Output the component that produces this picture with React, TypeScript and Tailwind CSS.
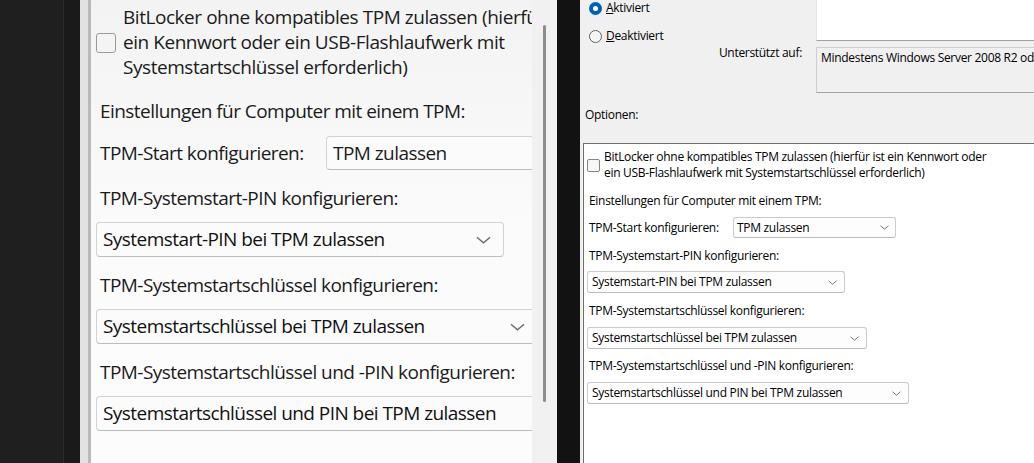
import React from "react";

function Chevron({ w, h, className }: { w: number; h: number; className?: string }) {
  return (
    <svg width={w} height={h} viewBox="0 0 10 5" className={className}>
      <path d="M0.6 0.6 L5 4.4 L9.4 0.6" fill="none" stroke="currentColor" strokeWidth="0.9" />
    </svg>
  );
}

function BigSelect({ text, w }: { text: string; w: string }) {
  return (
    <div
      className={`${w} h-[35px] shrink-0 flex items-center justify-between pl-[6px] pr-[12px] bg-[#fbfbfb] border border-[#d2d2d2] border-b-[#bdbdbd] rounded-[4px] text-[#111]`}
    >
      <span className="whitespace-nowrap">{text}</span>
      <Chevron w={15} h={8} className="text-[#6a6a6a]" />
    </div>
  );
}

function SmallSelect({ text, w }: { text: string; w: string }) {
  return (
    <div
      className={`${w} h-[22px] shrink-0 flex items-center justify-between pl-[4px] pr-[7px] bg-[#fdfdfd] border border-[#cbcbcb] border-b-[#bcbcbc] rounded-[3px] text-black`}
    >
      <span className="whitespace-nowrap">{text}</span>
      <Chevron w={9} h={5} className="text-[#555]" />
    </div>
  );
}

function LeftPanel() {
  return (
    <div className="flex w-[477px] h-full shrink-0">
      <div className="w-[8px] bg-[#e2e2e2]" />
      <div className="w-[3px] bg-[#b9b9b9]" />
      <div className="w-[441px] h-full overflow-hidden bg-gradient-to-b from-[#f3f3f3] via-[#fbfbfb] to-[#fcfcfc] font-['Open_Sans',sans-serif] text-[19px] leading-[25px] tracking-[-0.55px] text-[#1b1b1b]">
        <div className="flex flex-col pt-[5px] pl-[5px]">
          <div className="flex items-center">
            <div className="w-[20px] h-[20px] shrink-0 rounded-[3px] border border-[#9a9a9a] bg-[#f4f4f4]" />
            <div className="ml-[7px] whitespace-nowrap tracking-[-0.45px]">
              <div>BitLocker ohne kompatibles TPM zulassen (hierfür ist</div>
              <div>ein Kennwort oder ein USB-Flashlaufwerk mit</div>
              <div>Systemstartschlüssel erforderlich)</div>
            </div>
          </div>
          <div className="mt-[19px] pl-[4px] whitespace-nowrap">Einstellungen für Computer mit einem TPM:</div>
          <div className="mt-[12px] flex items-center h-[34px]">
            <div className="w-[230px] shrink-0 pl-[4px] whitespace-nowrap">TPM-Start konfigurieren:</div>
            <div className="w-[256px] h-[34px] shrink-0 flex items-center pl-[6px] bg-[#fbfbfb] border border-[#d2d2d2] border-b-[#bdbdbd] rounded-[4px] whitespace-nowrap">
              TPM zulassen
            </div>
          </div>
          <div className="mt-[16px] pl-[4px] whitespace-nowrap">TPM-Systemstart-PIN konfigurieren:</div>
          <div className="mt-[11px]">
            <BigSelect text="Systemstart-PIN bei TPM zulassen" w="w-[408px]" />
          </div>
          <div className="mt-[16px] pl-[4px] whitespace-nowrap">TPM-Systemstartschlüssel konfigurieren:</div>
          <div className="mt-[11px]">
            <BigSelect text="Systemstartschlüssel bei TPM zulassen" w="w-[442px]" />
          </div>
          <div className="mt-[16px] pl-[4px] whitespace-nowrap">TPM-Systemstartschlüssel und -PIN konfigurieren:</div>
          <div className="mt-[11px]">
            <BigSelect text="Systemstartschlüssel und PIN bei TPM zulassen" w="w-[509px]" />
          </div>
        </div>
      </div>
      <div className="w-[25px] h-full bg-[#f1f1f1] flex justify-center pt-[25px]">
        <div className="w-[3px] h-[377px] rounded-full bg-[#8c8c8c]" />
      </div>
    </div>
  );
}

function RightDialog() {
  return (
    <div className="flex flex-col w-[454px] h-full shrink-0 bg-[#f0f0f0] font-['Open_Sans',sans-serif] text-[12px] leading-[16px] tracking-[-0.3px] text-black">
      <div className="flex h-[143px] shrink-0">
        <div className="w-[236px] shrink-0 flex flex-col">
          <div className="flex items-center h-[16px] pl-[9px]">
            <div className="w-[13px] h-[13px] shrink-0 rounded-full bg-[#005fb8] flex items-center justify-center">
              <div className="w-[5px] h-[5px] rounded-full bg-white" />
            </div>
            <span className="ml-[4px] whitespace-nowrap">
              <span className="underline">A</span>ktiviert
            </span>
          </div>
          <div className="flex items-center h-[16px] pl-[9px] mt-[12px]">
            <div className="w-[13px] h-[13px] shrink-0 rounded-full border border-[#5f5f5f] bg-[#f6f6f6]" />
            <span className="ml-[4px] whitespace-nowrap">
              <span className="underline">D</span>eaktiviert
            </span>
          </div>
          <div className="mt-[1px] text-right pr-[14px]">Unterstützt auf:</div>
          <div className="mt-[46px] pl-[5px]">Optionen:</div>
        </div>
        <div className="flex-1 min-w-0 flex flex-col">
          <div className="h-[41px] bg-white border-b border-[#a0a0a0] border-l border-l-[#e6e6e6]" />
          <div className="mt-[6px] h-[46px] bg-[#f0f0f0] border-t border-l border-[#cfcfcf] border-b border-b-[#a3a3a3] pl-[4px] pt-[2px] whitespace-nowrap overflow-hidden">
            Mindestens Windows Server 2008 R2 oder Windows 7
          </div>
        </div>
      </div>
      <div className="flex-1 ml-[3px] bg-white border-t border-l border-[#6f6f6f] flex flex-col pl-[3px] pt-[5px] overflow-hidden">
        <div className="flex items-center">
          <div className="w-[13px] h-[13px] shrink-0 rounded-[2px] border border-[#858585] bg-[#f7f7f7]" />
          <div className="ml-[4px] whitespace-nowrap">
            <div>BitLocker ohne kompatibles TPM zulassen (hierfür ist ein Kennwort oder</div>
            <div>ein USB-Flashlaufwerk mit Systemstartschlüssel erforderlich)</div>
          </div>
        </div>
        <div className="mt-[12px] pl-[2px] whitespace-nowrap">Einstellungen für Computer mit einem TPM:</div>
        <div className="mt-[8px] flex items-center h-[21px]">
          <div className="w-[146px] shrink-0 pl-[2px] whitespace-nowrap">TPM-Start konfigurieren:</div>
          <div className="w-[163px] h-[21px] shrink-0 flex items-center justify-between pl-[3px] pr-[6px] bg-[#fdfdfd] border border-[#cbcbcb] border-b-[#bcbcbc] rounded-[3px]">
            <span>TPM zulassen</span>
            <Chevron w={9} h={5} className="text-[#555]" />
          </div>
        </div>
        <div className="mt-[10px] pl-[2px] whitespace-nowrap">TPM-Systemstart-PIN konfigurieren:</div>
        <div className="mt-[7px]">
          <SmallSelect text="Systemstart-PIN bei TPM zulassen" w="w-[258px]" />
        </div>
        <div className="mt-[10px] pl-[2px] whitespace-nowrap">TPM-Systemstartschlüssel konfigurieren:</div>
        <div className="mt-[8px]">
          <SmallSelect text="Systemstartschlüssel bei TPM zulassen" w="w-[280px]" />
        </div>
        <div className="mt-[9px] pl-[2px] whitespace-nowrap">TPM-Systemstartschlüssel und -PIN konfigurieren:</div>
        <div className="mt-[8px]">
          <SmallSelect text="Systemstartschlüssel und PIN bei TPM zulassen" w="w-[322px]" />
        </div>
      </div>
    </div>
  );
}

export default function App() {
  return (
    <div className="flex w-[1034px] h-[463px] overflow-hidden bg-[#1e1e1e]">
      <div className="w-[63px] h-full shrink-0 bg-[#1f1f1f]" />
      <div className="w-[1px] h-full shrink-0 bg-[#2c2c2c]" />
      <div className="w-[16px] h-full shrink-0 bg-[#1a1a1a]" />
      <LeftPanel />
      <div className="w-[23px] h-full shrink-0 bg-[#121212]" />
      <RightDialog />
    </div>
  );
}
